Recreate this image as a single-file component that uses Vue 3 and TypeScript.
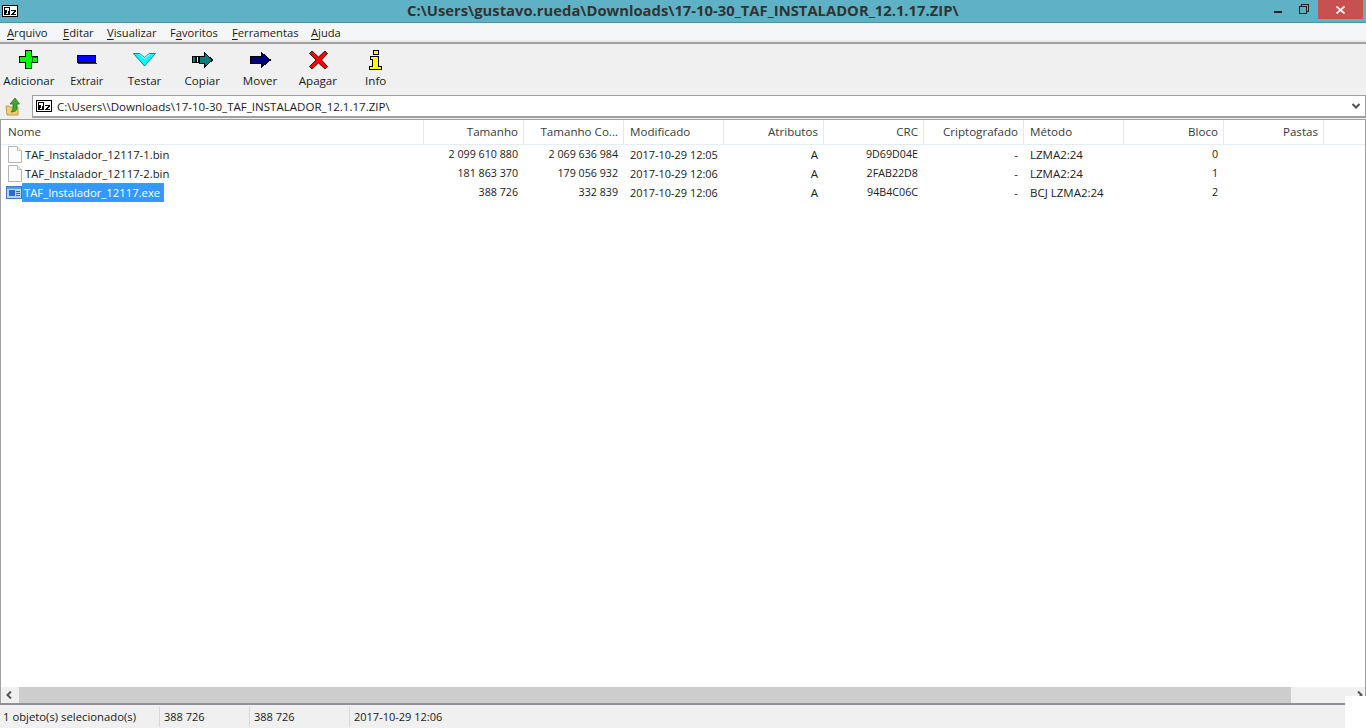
<script setup lang="ts">
interface Row { name: string; size: string; packed: string; modified: string; attr: string; crc: string; enc: string; method: string; block: string; folders: string; kind: string; selected?: boolean }
const menuList = [
  { before: '', key: 'A', after: 'rquivo' },
  { before: '', key: 'E', after: 'ditar' },
  { before: '', key: 'V', after: 'isualizar' },
  { before: 'F', key: 'a', after: 'voritos' },
  { before: '', key: 'F', after: 'erramentas' },
  { before: '', key: 'A', after: 'juda' },
]
const tools = ['Adicionar', 'Extrair', 'Testar', 'Copiar', 'Mover', 'Apagar', 'Info']
const columns = [
  { label: 'Nome', left: true }, { label: 'Tamanho' }, { label: 'Tamanho Co...' }, { label: 'Modificado', left: true },
  { label: 'Atributos' }, { label: 'CRC' }, { label: 'Criptografado' }, { label: 'Método', left: true }, { label: 'Bloco' }, { label: 'Pastas' },
]
const rows: Row[] = [
  { name: 'TAF_Instalador_12117-1.bin', size: '2 099 610 880', packed: '2 069 636 984', modified: '2017-10-29 12:05', attr: 'A', crc: '9D69D04E', enc: '-', method: 'LZMA2:24', block: '0', folders: '', kind: 'file' },
  { name: 'TAF_Instalador_12117-2.bin', size: '181 863 370', packed: '179 056 932', modified: '2017-10-29 12:06', attr: 'A', crc: '2FAB22D8', enc: '-', method: 'LZMA2:24', block: '1', folders: '', kind: 'file' },
  { name: 'TAF_Instalador_12117.exe', size: '388 726', packed: '332 839', modified: '2017-10-29 12:06', attr: 'A', crc: '94B4C06C', enc: '-', method: 'BCJ LZMA2:24', block: '2', folders: '', kind: 'exe', selected: true },
]
const status = ['1 objeto(s) selecionado(s)', '388 726', '388 726', '2017-10-29 12:06']
</script>

<template>
  <div class="window">
    <header class="titlebar">
      <svg class="logo" width="16" height="12" viewBox="0 0 16 12" shape-rendering="crispEdges">
        <rect width="16" height="12" fill="#000" /><rect x="1" y="1" width="14" height="10" fill="#fff" />
        <rect x="2" y="2" width="6" height="8" fill="#000" />
        <path d="M3 3h4v1.500L5.500 9H4.200L5.400 4.500H3z" fill="#fff" />
        <path d="M9 5h5v1l-3 3h3v1H9V9l3-3H9z" fill="#000" />
      </svg>
      <h1 class="title">C:\Users\gustavo.rueda\Downloads\17-10-30_TAF_INSTALADOR_12.1.17.ZIP\</h1>
      <div class="controls">
        <span class="btn-min"></span>
        <svg class="btn-max" width="10" height="10" viewBox="0 0 10 10" fill="none" stroke="#222" shape-rendering="crispEdges">
          <rect x="0.5" y="2.500" width="7" height="7" />
          <path d="M2.500 2.500V.5h7v7h-2" />
        </svg>
        <div class="btn-close">
          <svg width="9" height="8" viewBox="0 0 9 8" stroke="#fff" stroke-width="1.600" fill="none"><path d="M.5.5l8 7M8.500.5l-8 7" /></svg>
        </div>
      </div>
    </header>

    <nav class="menubar">
      <span v-for="m in menuList" :key="m.after" class="menu">{{ m.before }}<u>{{ m.key }}</u>{{ m.after }}</span>
    </nav>

    <section class="toolbar">
      <div v-for="t in tools" :key="t" class="tool">
        <div class="tool-icon">
          <svg v-if="t === 'Adicionar'" class="shift" width="20" height="20" viewBox="0 0 20 20" shape-rendering="crispEdges">
            <path d="M6.500.5h6v6h6v6h-6v6h-6v-6h-6v-6h6z" fill="#00ff00" stroke="#000" />
            <path d="M13 7h1v6h-1v6H7v-1h5v-6h1zM14 7h5v1h-5z" fill="#006000" opacity=".7" />
          </svg>
          <svg v-else-if="t === 'Extrair'" width="20" height="9" viewBox="0 0 20 9" shape-rendering="crispEdges">
            <rect x=".5" y=".5" width="18" height="7" fill="#0000ff" stroke="#000" />
            <rect x="1" y="7.500" width="19" height="1.500" fill="#333" />
          </svg>
          <svg v-else-if="t === 'Testar'" width="23" height="14" viewBox="0 0 23 14">
            <path d="M.5.5h6l5 4 5-4h6l-11 12.500z" fill="#00ffff" stroke="#107080" stroke-width=".9" />
            <path d="M6.500 1.500l5 4 5-4" fill="none" stroke="#e8ffff" stroke-width="1" />
          </svg>
          <svg v-else-if="t === 'Copiar'" class="shift" width="22" height="16" viewBox="0 0 22 16" shape-rendering="crispEdges">
            <rect x=".5" y="4.500" width="3" height="6" fill="#008080" stroke="#000" />
            <rect x="4.500" y="4.500" width="2" height="6" fill="#fff" stroke="#000" />
            <path d="M7.500 4.500h5v-4l8 7.500-8 7v-4h-5z" fill="#008080" stroke="#000" />
          </svg>
          <svg v-else-if="t === 'Mover'" class="shift" width="22" height="16" viewBox="0 0 22 16" shape-rendering="crispEdges">
            <path d="M.5 4.500h11v-4l9 7.500-9 7v-4H.5z" fill="#000080" stroke="#000" />
          </svg>
          <svg v-else-if="t === 'Apagar'" class="shift" width="19" height="20" viewBox="0 0 19 20">
            <path d="M3 1l6.500 6L16 1l2.500 2.500L12.500 10l6 6.500-2.500 2.500-6.500-6L3 19 .5 16.500 7 10 .5 3.500z" fill="#ff0000" stroke="#000" stroke-width=".8" />
          </svg>
          <svg v-else width="13" height="20" viewBox="0 0 13 20" shape-rendering="crispEdges">
            <rect x="4.500" y=".5" width="5" height="4" fill="#ffff00" stroke="#000" />
            <path d="M1.500 6.500h8v10h3v3H.5v-3h3v-7h-2z" fill="#ffff00" stroke="#000" />
          </svg>
        </div>
        <span class="tool-label">{{ t }}</span>
      </div>
    </section>

    <section class="addressbar">
      <svg class="up" width="15" height="19" viewBox="0 0 15 19">
        <path d="M1 9h3l1 1h8v8H2z" fill="#f1cf72" stroke="#b98a2e" stroke-width=".8" />
        <path d="M10 1l4.500 6H12v4c0 3-3 4-6 4 1-1 2-2.500 2-5V7H5z" fill="#3fa82c" stroke="#1d6d17" stroke-width=".7" />
      </svg>
      <div class="combo">
        <svg class="logo small" width="16" height="12" viewBox="0 0 16 12" shape-rendering="crispEdges">
          <rect width="16" height="12" fill="#000" /><rect x="1" y="1" width="14" height="10" fill="#fff" />
          <rect x="2" y="2" width="6" height="8" fill="#000" />
          <path d="M3 3h4v1.500L5.500 9H4.200L5.400 4.500H3z" fill="#fff" />
          <path d="M9 5h5v1l-3 3h3v1H9V9l3-3H9z" fill="#000" />
        </svg>
        <span class="path">C:\Users\\Downloads\17-10-30_TAF_INSTALADOR_12.1.17.ZIP\</span>
        <svg class="chev" width="8" height="6" viewBox="0 0 8 6" fill="none" stroke="#555" stroke-width="2"><path d="M.5 1L4 4.500 7.500 1" /></svg>
      </div>
    </section>

    <main class="list">
      <div class="head">
        <div v-for="c in columns" :key="c.label" class="hcell" :class="{ left: c.left }">{{ c.label }}</div>
        <div class="hcell filler"></div>
      </div>
      <div class="rows">
        <div v-for="r in rows" :key="r.name" class="row">
          <div class="cell left namecell">
            <svg v-if="r.kind === 'file'" class="ficon" width="14" height="17" viewBox="0 0 14 17">
              <path d="M.5.5h9l4 4v12H.5z" fill="#fdfdfd" stroke="#b4b4b4" />
              <path d="M9.500.5v4h4" fill="#eee" stroke="#c0c0c0" />
            </svg>
            <svg v-else class="ficon exe" width="16" height="13" viewBox="0 0 16 13" shape-rendering="crispEdges">
              <rect x=".5" y=".5" width="15" height="12" fill="#b4d4f4" stroke="#3a78c0" />
              <rect x="1" y="1" width="14" height="2" fill="#5f9ade" />
              <rect x="3" y="4" width="6" height="6" fill="#2a6cc0" />
              <path d="M10 5h4M10 7h4M10 9h4" stroke="#2a6cc0" />
            </svg>
            <span class="fname" :class="{ sel: r.selected }">{{ r.name }}</span>
          </div>
          <div class="cell">{{ r.size }}</div>
          <div class="cell">{{ r.packed }}</div>
          <div class="cell left date">{{ r.modified }}</div>
          <div class="cell wide">{{ r.attr }}</div>
          <div class="cell hex">{{ r.crc }}</div>
          <div class="cell wide">{{ r.enc }}</div>
          <div class="cell left wide">{{ r.method }}</div>
          <div class="cell">{{ r.block }}</div>
          <div class="cell">{{ r.folders }}</div>
        </div>
      </div>
      <div class="hscroll">
        <svg class="arrow" width="6" height="8" viewBox="0 0 6 8" fill="none" stroke="#555" stroke-width="2"><path d="M5 .5L1.500 4 5 7.500" /></svg>
        <div class="thumb"></div>
        <svg class="arrow right" width="6" height="8" viewBox="0 0 6 8" fill="none" stroke="#555" stroke-width="2"><path d="M1 .5L4.500 4 1 7.500" /></svg>
      </div>
    </main>

    <footer class="statusbar">
      <span v-for="(s, i) in status" :key="i" class="stat" :class="'s' + i">{{ s }}</span>
      <div class="corner"></div>
    </footer>
  </div>
</template>

<style>
html, body { margin: 0; overflow: hidden; background: #fff; }
</style>

<style scoped>
.window { width: 1366px; height: 728px; display: flex; flex-direction: column; font-family: "Open Sans", "Noto Sans", sans-serif; font-size: 11px; color: #1a1a1a; background: #f0f0f0; overflow: hidden; }
.titlebar { height: 23px; box-sizing: border-box; flex: none; background: #5fb2c6; border-bottom: 1px solid #4a96a8; display: flex; align-items: flex-start; position: relative; }
.logo { margin: 5px 0 0 2px; flex: none; }
.title { position: absolute; left: 407px; top: 0; margin: 0; font: 700 14.800px/20px "Open Sans", sans-serif; color: #333; white-space: nowrap; }
.controls { margin-left: auto; display: flex; align-items: flex-start; }
.btn-min { width: 8px; height: 2px; background: #222; margin: 11px 17px 0 0; }
.btn-max { margin: 4px 9px 0 0; }
.btn-close { width: 45px; height: 19px; background: #c75050; margin-right: 3px; display: flex; align-items: center; justify-content: center; }
.menubar { height: 21px; box-sizing: border-box; flex: none; background: #f5f6f7; display: flex; align-items: center; padding: 0 0 0 7px; border-bottom: 2px solid #a0a0a0; box-shadow: inset 0 -2px 0 #ebebeb; font-size: 11.200px; }
.menu { flex: none; white-space: nowrap; }
.menu:nth-child(1) { width: 56px; }
.menu:nth-child(2) { width: 44px; }
.menu:nth-child(3) { width: 63px; }
.menu:nth-child(4) { width: 62px; }
.menu:nth-child(5) { width: 79px; }
.menu u { text-decoration-thickness: 1px; text-underline-offset: 2px; }
.toolbar { height: 51px; flex: none; display: flex; background: #f0f0f0; }
.tool { width: 57.800px; display: flex; flex-direction: column; align-items: center; height: 100%; flex: none; }
.tool-icon { height: 25px; margin-top: 3px; display: flex; align-items: center; justify-content: center; flex: none; }
.shift { margin-left: 1px; }
.tool-label { font-size: 11.600px; line-height: 16px; margin-top: 1px; white-space: nowrap; }
.tool:nth-child(2) .tool-label { font-size: 10.800px; }
.addressbar { height: 24px; flex: none; display: flex; align-items: flex-start; background: #f0f0f0; padding-left: 5px; box-sizing: border-box; }
.up { flex: none; margin: 2px 12px 0 0; }
.combo { flex: 1; height: 23px; background: #fff; border: 1px solid #a0a0a0; border-width: 1px 1px 2px 1px; display: flex; align-items: center; box-sizing: border-box; }
.logo.small { margin: 0 5px 0 3px; }
.path { font-size: 11.560px; white-space: nowrap; }
.chev { margin-left: auto; margin-right: 5px; }
.list { flex: 1; min-height: 0; display: flex; flex-direction: column; background: #fff; border-left: 1px solid #a0a0a0; border-right: 1px solid #a0a0a0; border-top: 1px solid #a0a0a0; min-width: 0; }
.head, .row { display: grid; grid-template-columns: 423px repeat(9, 100px) 1fr; }
.head { height: 25px; box-sizing: border-box; flex: none; border-bottom: 1px solid #e3edf5; }
.hcell { text-align: right; padding: 0 5px 0 6px; line-height: 24px; border-right: 1px solid #e9e9e9; white-space: nowrap; overflow: hidden; font-size: 11.600px; color: #3a3a3a; }
.hcell.left { text-align: left; }
.hcell:first-child { padding-left: 7px; }
.hcell.filler { border-right: 0; }
.rows { flex: 1; min-height: 0; }
.row { height: 19px; }
.cell { text-align: right; padding: 0 6px; line-height: 19px; white-space: nowrap; font-size: 10.700px; color: #202020; }
.cell.left { text-align: left; }
.cell.date { font-size: 10.950px; }
.cell.wide { font-size: 11.500px; }
.cell.hex { font-size: 10.700px; }
.namecell { display: flex; align-items: center; padding-left: 7px; font-size: 11.300px; }
.ficon { flex: none; margin-right: 1px; }
.ficon.exe { margin-left: -2px; margin-right: 0; }
.fname { padding: 0 4px 0 2px; line-height: 19px; height: 19px; box-sizing: border-box; }
.fname.sel { background: #3399ff; color: #fff; outline: 1px dotted #e87800; outline-offset: -1px; }
.hscroll { height: 16px; flex: none; display: flex; align-items: center; background: #f0f0f0; }
.arrow { flex: none; margin: 0 7px 0 5px; }
.arrow.right { margin: 0 2px 0 7px; margin-left: auto; }
.thumb { width: 1272px; height: 100%; background: #cdcdcd; flex: none; }
.statusbar { height: 25px; flex: none; background: #f0f0f0; border-top: 2px solid #90909a; display: flex; align-items: center; position: relative; box-sizing: border-box; }
.stat { height: 20px; line-height: 20px; white-space: nowrap; box-sizing: border-box; padding-left: 4px; font-size: 11px; border-right: 1px solid #d9d9d9; flex: none; }
.s0 { width: 160px; padding-left: 3px; font-size: 11.300px; }
.s1 { width: 90px; }
.s2 { width: 100px; }
.s3 { border-right: 0; }
.corner { position: absolute; right: 0; bottom: 0; width: 21px; height: 32px; background: #fff; }
</style>
